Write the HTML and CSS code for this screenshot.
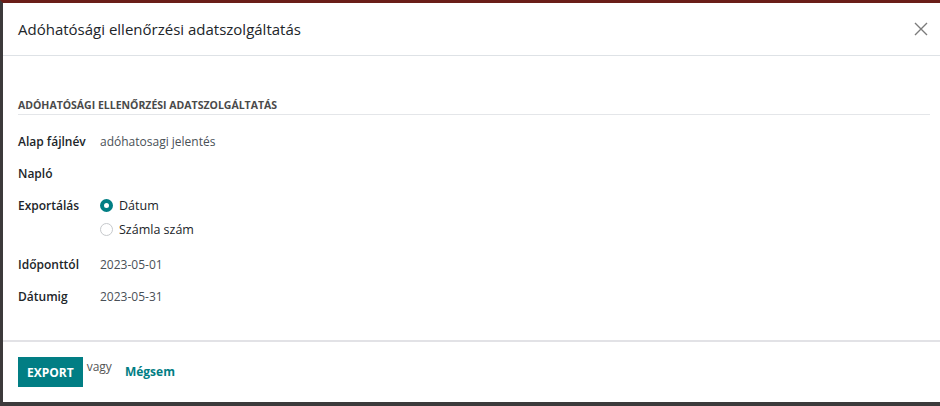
FILE: index.html
```html
<!DOCTYPE html>
<html lang="hu">
<head>
  <meta charset="UTF-8">
  <title>Adóhatósági ellenőrzési adatszolgáltatás</title>
  <link rel="stylesheet" href="styles.css">
</head>
<body>
  <div class="dialog">
    <header class="dialog-header">
      <h4 class="dialog-title">Adóhatósági ellenőrzési adatszolgáltatás</h4>
      <button class="btn-close" aria-label="Bezárás">
        <svg width="14" height="14" viewBox="0 0 14 14"><path d="M1 1L13 13M13 1L1 13" stroke="#7b7b7b" stroke-width="1.4" fill="none"/></svg>
      </button>
    </header>

    <main class="dialog-body">
      <div class="group-title">Adóhatósági ellenőrzési adatszolgáltatás</div>
      <div class="form-grid">
        <label class="field-label">Alap fájlnév</label>
        <div class="field-value">adóhatosagi jelentés</div>

        <label class="field-label">Napló</label>
        <div class="field-value"></div>

        <label class="field-label">Exportálás</label>
        <div class="field-value radios">
          <div class="radio-item"><span class="radio checked"></span>Dátum</div>
          <div class="radio-item"><span class="radio"></span>Számla szám</div>
        </div>

        <label class="field-label">Időponttól</label>
        <div class="field-value">2023-05-01</div>

        <label class="field-label">Dátumig</label>
        <div class="field-value">2023-05-31</div>
      </div>
    </main>

    <footer class="dialog-footer">
      <button class="btn-primary">Export</button>
      <span class="or">vagy</span>
      <a class="btn-link" href="#">Mégsem</a>
    </footer>
  </div>
</body>
</html>
```

FILE: styles.css
```css
html, body {
    height: 100%;
}

body {
    margin: 0;
    box-sizing: border-box;
    border-top: 3px solid #6a1e18;
    border-left: 3px solid #3c3a3b;
    border-bottom: 4px solid #3c3a3b;
    font-family: "Open Sans", sans-serif;
    color: #212529;
    background: #ffffff;
}

.dialog {
    height: 100%;
    display: flex;
    flex-direction: column;
}

.dialog-header {
    height: 52px;
    display: flex;
    align-items: center;
    justify-content: space-between;
    padding: 0 12px 0 15px;
    border-bottom: 1px solid #dee2e6;
}

.dialog-title {
    margin: 0;
    font-size: 15px;
    font-weight: 400;
    color: #212529;
}

.btn-close {
    border: none;
    background: none;
    padding: 0;
    width: 14px;
    height: 14px;
    cursor: pointer;
}

.dialog-body {
    flex: 1;
    padding: 42px 10px 0 15px;
}

.group-title {
    text-transform: uppercase;
    font-size: 10.5px;
    font-weight: 700;
    color: #4a4a4a;
    padding-bottom: 2px;
    border-bottom: 1px solid #e4e6e9;
    margin-bottom: 18px;
}

.form-grid {
    display: grid;
    grid-template-columns: 82px 1fr;
    row-gap: 14px;
    font-size: 12px;
}

.field-label {
    font-weight: 600;
    color: #212529;
    min-height: 18px;
}

.field-value {
    color: #495057;
    min-height: 18px;
}

.radios {
    display: flex;
    flex-direction: column;
    gap: 7px;
    padding-bottom: 4px;
}

.radio-item {
    display: flex;
    align-items: center;
    gap: 6px;
    color: #212529;
    font-size: 12.5px;
    font-weight: 500;
}

.radio {
    width: 13px;
    height: 13px;
    border-radius: 50%;
    border: 1px solid #c6c9cc;
    box-sizing: border-box;
}

.radio.checked {
    border: 4px solid #017e84;
    background: #ffffff;
}

.dialog-footer {
    height: 62px;
    box-sizing: border-box;
    border-top: 2px solid #e2e2e6;
    display: flex;
    align-items: flex-start;
    padding: 15px 15px 0;
}

.btn-primary {
    background: #017e84;
    border: 1px solid #017e84;
    color: #ffffff;
    font-family: inherit;
    font-size: 12px;
    font-weight: 700;
    text-transform: uppercase;
    height: 30px;
    padding: 0 8px;
    cursor: pointer;
}

.or {
    font-size: 12px;
    color: #555;
    margin: 0 0 0 4px;
    line-height: 20px;
}

.btn-link {
    color: #017e84;
    font-size: 12px;
    font-weight: 700;
    text-decoration: none;
    margin-left: 13px;
    line-height: 30px;
}
```
